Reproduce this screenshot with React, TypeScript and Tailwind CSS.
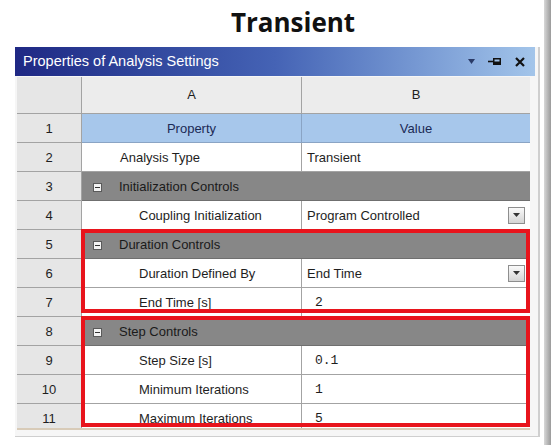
import React from 'react'

interface Row {
  n: number
  label: string
  value?: string
  kind: 'head' | 'group' | 'item'
  indent?: number
  numeric?: boolean
  dropdown?: boolean
}

const rows: Row[] = [
  { n: 1, label: 'Property', value: 'Value', kind: 'head' },
  { n: 2, label: 'Analysis Type', value: 'Transient', kind: 'item', indent: 1 },
  { n: 3, label: 'Initialization Controls', kind: 'group' },
  { n: 4, label: 'Coupling Initialization', value: 'Program Controlled', kind: 'item', indent: 2, dropdown: true },
  { n: 5, label: 'Duration Controls', kind: 'group' },
  { n: 6, label: 'Duration Defined By', value: 'End Time', kind: 'item', indent: 2, dropdown: true },
  { n: 7, label: 'End Time [s]', value: '2', kind: 'item', indent: 2, numeric: true },
  { n: 8, label: 'Step Controls', kind: 'group' },
  { n: 9, label: 'Step Size [s]', value: '0.1', kind: 'item', indent: 2, numeric: true },
  { n: 10, label: 'Minimum Iterations', value: '1', kind: 'item', indent: 2, numeric: true },
  { n: 11, label: 'Maximum Iterations', value: '5', kind: 'item', indent: 2, numeric: true },
]

function MinusBox() {
  return (
    <span className="w-[9px] h-[9px] border border-[#5a5a5a] bg-[#f2f2f2] flex items-center justify-center">
      <span className="w-[5px] h-[1px] bg-[#333]" />
    </span>
  )
}

function DropButton() {
  return (
    <span className="ml-auto mr-[5px] mb-[2px] w-[17px] h-[17px] border border-[#8e8e8e] bg-gradient-to-b from-[#fafafa] to-[#d4d4d4] flex items-center justify-center">
      <svg width="7" height="4" viewBox="0 0 7 4">
        <path d="M0 0h7L3.5 4z" fill="#333" />
      </svg>
    </span>
  )
}

export default function App() {
  return (
    <div className="w-[551px] h-[445px] bg-white flex overflow-hidden font-['Liberation_Sans',Arial,sans-serif] text-[#1e1e1e]">
      <div className="w-[544px] flex flex-col">
        {/* Heading */}
        <div className="h-[47px] flex items-center justify-center pl-[42px] pb-[2px] font-['Open_Sans',sans-serif] font-bold text-[26px] text-[#111]">
          Transient
        </div>

        {/* Panel */}
        <div className="ml-[15px] w-[525px] h-[390px] bg-[#f6f6f6] border-r-2 border-b border-[#cfcfcf] flex flex-col">
          <div className="w-[520px] h-[29px] bg-gradient-to-r from-[#1f2884] via-[#4563b5] to-[#a3c5ea] flex items-center pl-[8px] pr-[10px]">
            <span className="text-white text-[14.5px]">Properties of Analysis Settings</span>
            <div className="ml-auto flex items-center gap-[13px]">
              <svg width="7" height="5" viewBox="0 0 7 5">
                <path d="M0 0h7L3.5 5z" fill="#2a3a66" />
              </svg>
              <svg width="14" height="9" viewBox="0 0 14 9">
                <path d="M0 4.5h5" stroke="#111" strokeWidth="1.6" />
                <rect x="5" y="1" width="8" height="7" fill="#111" />
                <rect x="6.5" y="2.5" width="5" height="2" fill="#9ebfe4" />
              </svg>
              <svg width="10" height="10" viewBox="0 0 10 10">
                <path d="M1 1l8 8M9 1l-8 8" stroke="#111" strokeWidth="2.2" />
              </svg>
            </div>
          </div>

          {/* Table */}
          <div className="relative ml-[2px] mt-[1px] w-[513px] h-[353px] overflow-hidden bg-white border-b-2 border-[#d8cbb8]">
            <div className="grid grid-cols-[65px_220px_228px] text-[13px]">
              {/* column letters */}
              <div className="h-[37px] bg-[#e6e6e6] border-r border-b border-[#a3a3a3]" />
              <div className="h-[37px] bg-[#ececec] border-r border-b border-[#a3a3a3] flex items-center justify-center">A</div>
              <div className="h-[37px] bg-[#ececec] border-b border-[#a3a3a3] flex items-center justify-center">B</div>

              {rows.map((r) => (
                <React.Fragment key={r.n}>
                  <div className="h-[29px] pt-[2px] bg-[#e6e6e6] border-r border-b border-[#a3a3a3] flex items-center justify-center">
                    {r.n}
                  </div>
                  {r.kind === 'head' && (
                    <>
                      <div className="h-[29px] pt-[2px] bg-[#a7c7eb] border-r border-b border-[#8aa4c4] flex items-center justify-center text-[#1b2a55]">
                        {r.label}
                      </div>
                      <div className="h-[29px] pt-[2px] bg-[#a7c7eb] border-b border-[#8aa4c4] flex items-center justify-center text-[#1b2a55]">
                        {r.value}
                      </div>
                    </>
                  )}
                  {r.kind === 'group' && (
                    <div className="col-span-2 h-[29px] pt-[2px] bg-[#878787] border-b border-[#6f6f6f] flex items-center pl-[11px] gap-[17px] text-[#1a1a1a]">
                      <MinusBox />
                      <span>{r.label}</span>
                    </div>
                  )}
                  {r.kind === 'item' && (
                    <>
                      <div
                        className={
                          'h-[29px] pt-[2px] bg-white border-r border-b border-[#a3a3a3] flex items-center ' +
                          (r.indent === 1 ? 'pl-[38px]' : 'pl-[57px]')
                        }
                      >
                        {r.label}
                      </div>
                      <div
                        className={
                          'h-[29px] pt-[2px] bg-white border-b border-[#a3a3a3] flex items-center ' +
                          (r.numeric ? "pl-[13px] font-['Liberation_Mono',monospace] text-[13px]" : 'pl-[5px]')
                        }
                      >
                        {r.value}
                        {r.dropdown && <DropButton />}
                      </div>
                    </>
                  )}
                </React.Fragment>
              ))}
            </div>

            {/* highlight boxes */}
            <div className="absolute left-[64px] top-[152px] w-[449px] h-[84px] border-4 border-[#e8141c]" />
            <div className="absolute left-[64px] top-[239px] w-[449px] h-[111px] border-4 border-[#e8141c]" />
          </div>
        </div>
      </div>
      <div className="w-[7px] bg-gradient-to-r from-[#d8d8d8] to-[#9a9a9a]" />
    </div>
  )
}
